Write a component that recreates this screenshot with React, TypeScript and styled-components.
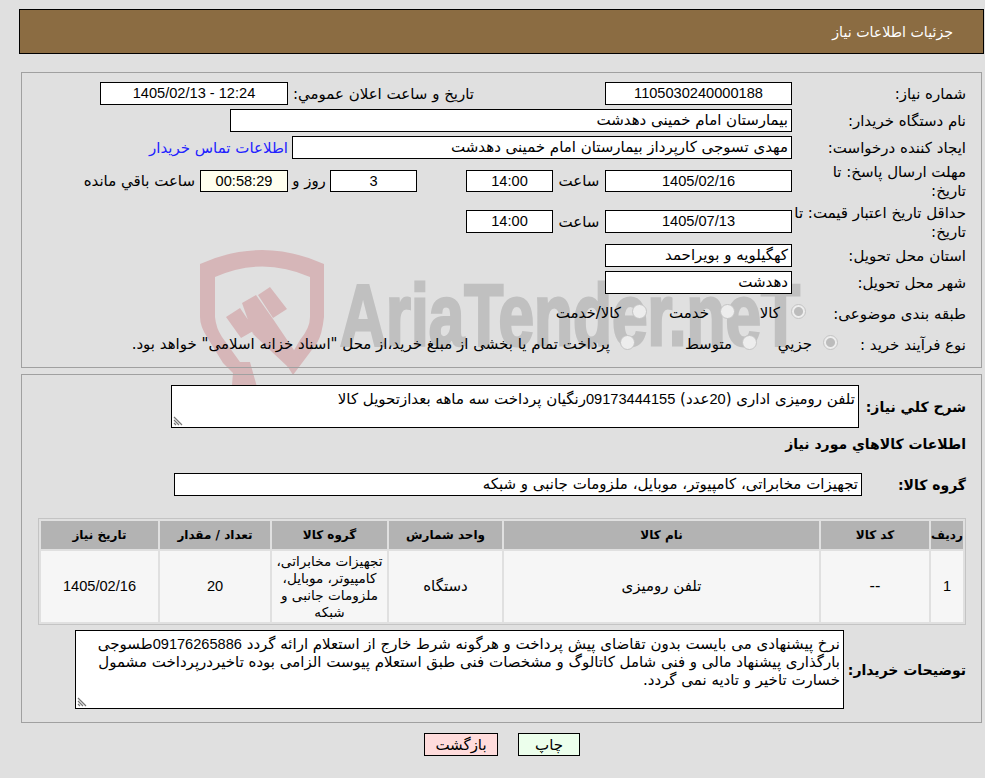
import React from "react";
import styled, { createGlobalStyle } from "styled-components";

const GlobalStyle = createGlobalStyle`
  html, body {
    margin: 0;
    padding: 0;
    background: #e0e0e0;
  }
  body {
    font-family: "DejaVu Sans", sans-serif;
    font-size: 15px;
    color: #000;
  }
`;

const Page = styled.div`
  position: relative;
  width: 985px;
  height: 778px;
  overflow: hidden;
  direction: rtl;
`;

const Header = styled.div`
  box-sizing: border-box;
  display: flex;
  align-items: center;
  height: 45px;
  margin: 9px 1px 0 19px;
  padding-right: 30px;
  background: #8b6c42;
  border: 1px solid #000;
  color: #fff;
  font-size: 14.2px;
`;

const Panel = styled.section`
  box-sizing: border-box;
  position: relative;
  margin: 0 3px 0 21px;
  border: 1px solid #a0a0a0;
`;

const TopPanel = styled(Panel)`
  height: 296px;
  margin-top: 18px;
  padding: 7px 15px 0 0;
`;

const BottomPanel = styled(Panel)`
  height: 349px;
  margin-top: 6px;
  padding: 10px 15px 0 0;
`;

const Row = styled.div<{ $h: number; $mt?: number }>`
  position: relative;
  display: flex;
  align-items: center;
  height: ${(p) => p.$h}px;
  margin-top: ${(p) => p.$mt ?? 0}px;
`;

const Label = styled.div`
  box-sizing: border-box;
  flex: 0 0 174px;
  padding-top: 2px;
  line-height: 19px;
`;

const Field = styled.div<{ $w: number; $bg?: string; $align?: string; $h?: number; $mr?: number }>`
  box-sizing: border-box;
  flex: 0 0 ${(p) => p.$w}px;
  height: ${(p) => p.$h ?? 23}px;
  line-height: ${(p) => (p.$h ?? 23) - 2}px;
  margin-right: ${(p) => p.$mr ?? 0}px;
  padding: 0 3px;
  background: ${(p) => p.$bg ?? "#fff"};
  border: 1px solid #000;
  text-align: ${(p) => p.$align ?? "right"};
  white-space: nowrap;
  overflow: hidden;
`;

const Num = styled.span`
  font-family: "Liberation Sans", sans-serif;
  font-size: 14.6px;
`;

const Slot = styled.span<{ $w: number; $mr?: number; $align?: string }>`
  flex: 0 0 ${(p) => p.$w}px;
  margin-right: ${(p) => p.$mr ?? 0}px;
  text-align: ${(p) => p.$align ?? "center"};
  white-space: nowrap;
`;

const Text = styled.span<{ $mr?: number }>`
  margin-right: ${(p) => p.$mr ?? 0}px;
  white-space: nowrap;
`;

const Link = styled.a`
  margin-right: 4px;
  color: #2222ff;
  white-space: nowrap;
`;

const Options = styled.div<{ $shift: number }>`
  display: flex;
  align-items: center;
  margin-right: ${(p) => p.$shift}px;
`;

const Option = styled.label<{ $w?: number; $gap?: number }>`
  display: flex;
  align-items: center;
  gap: ${(p) => p.$gap ?? 11}px;
  flex: 0 0 ${(p) => (p.$w ? `${p.$w}px` : "auto")};
  white-space: nowrap;
`;

const Radio = styled.span<{ $on?: boolean }>`
  box-sizing: border-box;
  flex: 0 0 15px;
  width: 15px;
  height: 15px;
  margin-top: -3px;
  border-radius: 50%;
  border: 1px solid #c4c4c4;
  background: ${(p) => (p.$on ? "radial-gradient(circle, #bcbcbc 0 4px, #ededed 5px)" : "#ededed")};
`;

const Strong = styled.div<{ $w?: number }>`
  flex: 0 0 ${(p) => p.$w ?? 107}px;
  font-weight: bold;
  font-size: 14px;
  white-space: nowrap;
`;

const Area = styled(Field)`
  position: relative;
  white-space: normal;
  line-height: 18px;
  padding: 4px 3px 2px;
`;

const Grip = styled.svg`
  position: absolute;
  left: 1px;
  bottom: 1px;
`;

const Table = styled.table`
  box-sizing: border-box;
  width: 928px;
  margin: 8px 0 0 0;
  border: 1px solid #c4c4c4;
  border-collapse: separate;
  border-spacing: 2px;
  table-layout: fixed;
`;

const Th = styled.th<{ $w: number }>`
  width: ${(p) => p.$w}px;
  height: 28px;
  padding: 0;
  background: #b3b3b3;
  font-size: 12px;
  font-weight: bold;
  text-align: center;
`;

const Td = styled.td`
  height: 71px;
  padding: 0;
  background: #f6f6f6;
  text-align: center;
  line-height: 17px;
`;

const GroupTd = styled(Td)`
  font-size: 13.6px;
  white-space: nowrap;
`;

const Actions = styled.div`
  display: flex;
  justify-content: center;
  gap: 20px;
  margin-top: 10px;
  padding-left: 19px;
`;

const Button = styled.button<{ $bg: string; $w: number }>`
  box-sizing: border-box;
  width: ${(p) => p.$w}px;
  height: 23px;
  padding: 0;
  background: ${(p) => p.$bg};
  border: 1px solid #000;
  font: inherit;
  color: #000;
`;

const Watermark = styled.svg`
  position: absolute;
  left: 190px;
  top: 240px;
`;

const ResizeGrip = () => (
  <Grip width="10" height="10" viewBox="0 0 10 10">
    <path d="M1 1l8 8M1 4l5 5M1 7l2 2" stroke="#777" strokeWidth="1.2" fill="none" />
  </Grip>
);

const App = () => (
  <>
    <GlobalStyle />
    <Page>
      <Watermark width="640" height="150" viewBox="0 0 640 150">
        <g fill="#d6b6b8">
          <path d="M10 24Q72-4 134 24V77Q132 95 127 103L103 135 96 124 110 100Q120 88 120 77V37Q72 16 25 37V77Q26 88 32 97L50 122 60 122 67 147 42 145 43 133 33 123 17 97Q10 86 10 77Z" />
          <path d="M36 77l14-9 15 22-14 8zM52 63l14-8 17 24-20 15zM68 55l12-8 17 22-14 9zM63 94l20-15 27 40-12 8z" />
        </g>
        <text x="150" y="105" fontFamily="Liberation Sans" fontWeight="bold" fontSize="88" fill="#c0c0c0" stroke="#c0c0c0" strokeWidth="3" textLength="460" lengthAdjust="spacingAndGlyphs" direction="ltr">AriaTender.neT</text>
      </Watermark>

      <Header>جزئیات اطلاعات نیاز</Header>

      <TopPanel>
        <Row $h={27}>
          <Label>شماره نیاز:</Label>
          <Field $w={187} $align="center"><Num>1105030240000188</Num></Field>
          <Slot $w={186} $mr={131} $align="right">تاریخ و ساعت اعلان عمومي:</Slot>
          <Field $w={188} $align="center"><Num>12:24 - 1405/02/13</Num></Field>
        </Row>
        <Row $h={27}>
          <Label>نام دستگاه خریدار:</Label>
          <Field $w={562}>بیمارستان امام خمینی دهدشت</Field>
        </Row>
        <Row $h={27}>
          <Label>ایجاد کننده درخواست:</Label>
          <Field $w={500}>مهدی تسوجی کارپرداز بیمارستان امام خمینی دهدشت</Field>
          <Link>اطلاعات تماس خریدار</Link>
        </Row>
        <Row $h={40}>
          <Label>مهلت ارسال پاسخ: تا<br />تاریخ:</Label>
          <Field $w={187} $h={22} $align="center"><Num>1405/02/16</Num></Field>
          <Slot $w={52}>ساعت</Slot>
          <Field $w={87} $h={22} $align="center"><Num>14:00</Num></Field>
          <Field $w={87} $h={22} $mr={49} $align="center"><Num>3</Num></Field>
          <Slot $w={42}>روز و</Slot>
          <Field $w={88} $h={22} $bg="#ffffee" $align="center"><Num>00:58:29</Num></Field>
          <Text $mr={5}>ساعت باقي مانده</Text>
        </Row>
        <Row $h={41}>
          <Label>حداقل تاریخ اعتبار قیمت: تا تاریخ:</Label>
          <Field $w={187} $align="center"><Num>1405/07/13</Num></Field>
          <Slot $w={52}>ساعت</Slot>
          <Field $w={87} $align="center"><Num>14:00</Num></Field>
        </Row>
        <Row $h={27}>
          <Label>استان محل تحویل:</Label>
          <Field $w={187}>کهگیلویه و بویراحمد</Field>
        </Row>
        <Row $h={27}>
          <Label>شهر محل تحویل:</Label>
          <Field $w={187}>دهدشت</Field>
        </Row>
        <Row $h={34}>
          <Label>طبقه بندی موضوعی:</Label>
          <Options $shift={-14}>
            <Option $w={71}><Radio $on />کالا</Option>
            <Option $w={88}><Radio />خدمت</Option>
            <Option><Radio />کالا/خدمت</Option>
          </Options>
        </Row>
        <Row $h={28}>
          <Label>نوع فرآیند خرید :</Label>
          <Options $shift={-46}>
            <Option $w={81}><Radio $on />جزیي</Option>
            <Option $w={122} $gap={10}><Radio />متوسط</Option>
            <Option $gap={10}><Radio />پرداخت تمام یا بخشی از مبلغ خرید،از محل "اسناد خزانه اسلامی" خواهد بود.</Option>
          </Options>
        </Row>
      </TopPanel>

      <BottomPanel>
        <Row $h={43}>
          <Strong>شرح کلي نیاز:</Strong>
          <Area $w={688} $h={43}>تلفن رومیزی اداری (<Num>20</Num>عدد) <Num>09173444155</Num>رنگیان پرداخت سه ماهه بعدازتحویل کالا<ResizeGrip /></Area>
        </Row>
        <Row $h={31}>
          <Strong $w={300}>اطلاعات کالاهاي مورد نیاز</Strong>
        </Row>
        <Row $h={51}>
          <Strong $w={104}>گروه کالا:</Strong>
          <Field $w={688}>تجهیزات مخابراتی، کامپیوتر، موبایل، ملزومات جانبی و شبکه</Field>
        </Row>
        <Table>
          <thead>
            <tr>
              <Th $w={32}>ردیف</Th>
              <Th $w={108}>کد کالا</Th>
              <Th $w={315}>نام کالا</Th>
              <Th $w={113}>واحد شمارش</Th>
              <Th $w={115}>گروه کالا</Th>
              <Th $w={110}>تعداد / مقدار</Th>
              <Th $w={117}>تاریخ نیاز</Th>
            </tr>
          </thead>
          <tbody>
            <tr>
              <Td><Num>1</Num></Td>
              <Td>--</Td>
              <Td>تلفن رومیزی</Td>
              <Td>دستگاه</Td>
              <GroupTd>تجهیزات مخابراتی،<br />کامپیوتر، موبایل،<br />ملزومات جانبی و<br />شبکه</GroupTd>
              <Td><Num>20</Num></Td>
              <Td><Num>1405/02/16</Num></Td>
            </tr>
          </tbody>
        </Table>
        <Row $h={79} $mt={5}>
          <Strong $w={122}>توضیحات خریدار:</Strong>
          <Area $w={769} $h={79}>نرخ پیشنهادی می بایست بدون تقاضای پیش پرداخت و هرگونه شرط خارج از استعلام ارائه گردد <Num>09176265886</Num>طسوجی بارگذاری پیشنهاد مالی و فنی شامل کاتالوگ و مشخصات فنی طبق استعلام پیوست الزامی بوده تاخیردرپرداخت مشمول خسارت تاخیر و تادیه نمی گردد.<ResizeGrip /></Area>
        </Row>
      </BottomPanel>

      <Actions>
        <Button $bg="#ecffec" $w={62}>چاپ</Button>
        <Button $bg="#ffdcdc" $w={74}>بازگشت</Button>
      </Actions>
    </Page>
  </>
);

export default App;
